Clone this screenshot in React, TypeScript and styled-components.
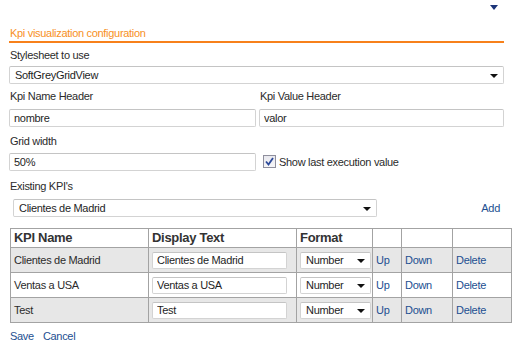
import React from 'react';
import styled, { createGlobalStyle } from 'styled-components';

const GlobalStyle = createGlobalStyle`
  html, body {
    margin: 0;
    padding: 0;
    background: #fff;
  }
  body {
    font-family: 'Liberation Sans', Arial, sans-serif;
    font-size: 11px;
    letter-spacing: -0.3px;
    color: #2b2b2b;
  }
`;

const Page = styled.div`
  width: 523px;
  height: 353px;
  overflow: hidden;
`;

const TopBar = styled.div`
  display: flex;
  justify-content: flex-end;
  height: 22px;
  padding: 5px 25px 0 0;
  box-sizing: border-box;
`;

const Collapse = styled.span`
  width: 0;
  height: 0;
  border-left: 4px solid transparent;
  border-right: 4px solid transparent;
  border-top: 5px solid #1b3479;
`;

const Panel = styled.div`
  width: 495px;
  margin-left: 9px;
  display: flex;
  flex-direction: column;
`;

const SectionTitle = styled.div`
  color: #f7901e;
  line-height: 14px;
  padding: 4px 1px 1px;
  border-bottom: 2px solid #f7811b;
`;

const Label = styled.div<{ $top: number; $bottom: number }>`
  line-height: 14px;
  padding: 0 1px;
  margin: ${(p) => p.$top}px 0 ${(p) => p.$bottom}px;
`;

const Pair = styled.div`
  display: grid;
  grid-template-columns: 247px 245px;
  column-gap: 3px;
  align-items: center;
`;

const TextInput = styled.input<{ $w?: number; $h?: number }>`
  display: block;
  box-sizing: border-box;
  width: ${(p) => (p.$w ? `${p.$w}px` : '100%')};
  height: ${(p) => p.$h ?? 18}px;
  border: 1px solid #d3d3d3;
  border-top-color: #c4c4c4;
  border-radius: 2px;
  padding: 0 4px;
  font: inherit;
  letter-spacing: inherit;
  color: #1e1e1e;
  background: #fff;
  outline: none;
`;

const SelectWrap = styled.div<{ $w?: number; $ml?: number }>`
  position: relative;
  box-sizing: border-box;
  width: ${(p) => (p.$w ? `${p.$w}px` : '100%')};
  margin-left: ${(p) => p.$ml ?? 0}px;
`;

const NativeSelect = styled.select<{ $h?: number }>`
  display: block;
  appearance: none;
  box-sizing: border-box;
  width: 100%;
  height: ${(p) => p.$h ?? 18}px;
  border: 1px solid #d3d3d3;
  border-top-color: #c4c4c4;
  border-radius: 2px;
  padding: 0 0 0 5px;
  font: inherit;
  letter-spacing: inherit;
  color: #1e1e1e;
  background: #fff;
  outline: none;
`;

const Arrow = styled.span`
  position: absolute;
  right: 6px;
  top: 50%;
  margin-top: -1px;
  width: 0;
  height: 0;
  border-left: 4px solid transparent;
  border-right: 4px solid transparent;
  border-top: 4px solid #111;
  pointer-events: none;
`;

const CheckRow = styled.label`
  display: flex;
  align-items: center;
  gap: 3px;
  padding-left: 4px;
  margin-top: -1px;
`;

const CheckBox = styled.span`
  box-sizing: border-box;
  width: 13px;
  height: 13px;
  border: 1px solid #8f8f9d;
  background: linear-gradient(#e9e9ef, #f6f6f8);
  display: flex;
  align-items: center;
  justify-content: center;
`;

const KpiRow = styled.div`
  display: flex;
  align-items: center;
  justify-content: space-between;
  padding-right: 4px;
`;

const Link = styled.a`
  color: #1d4f91;
  text-decoration: none;
  cursor: pointer;
`;

const Grid = styled.table`
  border-collapse: collapse;
  width: 501px;
  margin: 11px 0 0 1px;
  table-layout: fixed;

  th, td {
    border: 1px solid #a3a3a3;
    padding: 0 3px;
    text-align: left;
    line-height: 14px;
  }
  th {
    height: 18px;
    font-size: 13px;
    line-height: 16px;
    font-weight: bold;
    color: #333;
    background: #fff;
  }
  td {
    height: 24px;
  }
`;

const Row = styled.tr<{ $alt?: boolean }>`
  background: ${(p) => (p.$alt ? '#e7e7e7' : '#fff')};
`;

const Footer = styled.div`
  display: flex;
  gap: 9px;
  line-height: 14px;
  padding: 6px 1px 0;
`;

const kpis = ['Clientes de Madrid', 'Ventas a USA', 'Test'];

const Select = ({ value, w, h, ml }: { value: string; w?: number; h?: number; ml?: number }) => (
  <SelectWrap $w={w} $ml={ml}>
    <NativeSelect $h={h} defaultValue={value}>
      <option>{value}</option>
    </NativeSelect>
    <Arrow />
  </SelectWrap>
);

export default function App() {
  return (
    <Page>
      <GlobalStyle />
      <TopBar>
        <Collapse />
      </TopBar>
      <Panel>
        <SectionTitle>Kpi visualization configuration</SectionTitle>
        <Label $top={5} $bottom={4}>Stylesheet to use</Label>
        <Select value='SoftGreyGridView' />
        <Pair>
          <Label $top={5} $bottom={6}>Kpi Name Header</Label>
          <Label $top={5} $bottom={6}>Kpi Value Header</Label>
          <TextInput defaultValue='nombre' />
          <TextInput defaultValue='valor' />
        </Pair>
        <Label $top={7} $bottom={5}>Grid width</Label>
        <Pair>
          <TextInput defaultValue='50%' />
          <CheckRow>
            <CheckBox>
              <svg width='9' height='9' viewBox='0 0 9 9'>
                <path d='M1 4.5 L3.5 7.5 L8 1' fill='none' stroke='#2c4a9a' strokeWidth='1.8' />
              </svg>
            </CheckBox>
            Show last execution value
          </CheckRow>
        </Pair>
        <Label $top={8} $bottom={6}>Existing KPI's</Label>
        <KpiRow>
          <Select value='Clientes de Madrid' w={364} ml={4} />
          <Link>Add</Link>
        </KpiRow>
        <Grid>
          <colgroup>
            <col style={{ width: 138 }} />
            <col style={{ width: 148 }} />
            <col style={{ width: 76 }} />
            <col style={{ width: 29 }} />
            <col style={{ width: 51 }} />
            <col style={{ width: 59 }} />
          </colgroup>
          <thead>
            <tr>
              <th>KPI Name</th>
              <th>Display Text</th>
              <th>Format</th>
              <th />
              <th />
              <th />
            </tr>
          </thead>
          <tbody>
            {kpis.map((k, i) => (
              <Row key={k} $alt={i % 2 === 0}>
                <td>{k}</td>
                <td>
                  <TextInput defaultValue={k} $w={135} $h={17} />
                </td>
                <td>
                  <Select value='Number' w={71} h={17} />
                </td>
                <td>
                  <Link>Up</Link>
                </td>
                <td>
                  <Link>Down</Link>
                </td>
                <td>
                  <Link>Delete</Link>
                </td>
              </Row>
            ))}
          </tbody>
        </Grid>
        <Footer>
          <Link>Save</Link>
          <Link>Cancel</Link>
        </Footer>
      </Panel>
    </Page>
  );
}
